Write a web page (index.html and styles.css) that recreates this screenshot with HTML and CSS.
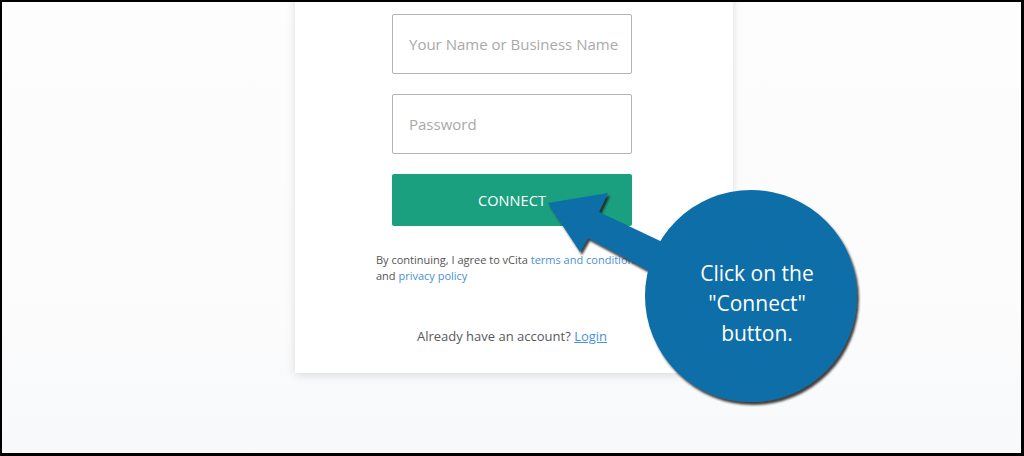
FILE: index.html
```html
<!DOCTYPE html>
<html lang="en">
<head>
<meta charset="utf-8">
<title>vCita Connect</title>
<link rel="stylesheet" href="styles.css">
</head>
<body>
<div class="frame">
  <div class="card">
    <div class="field"><span class="placeholder">Your Name or Business Name</span></div>
    <div class="field"><span class="placeholder">Password</span></div>
    <div class="btn">CONNECT</div>
    <p class="terms">By continuing, I agree to vCita <a href="#">terms and conditions</a> and <a href="#">privacy policy</a></p>
    <p class="login">Already have an account? <a href="#">Login</a></p>
  </div>

  <div class="callout">
    <svg class="callout-art" width="1024" height="456" viewBox="0 0 1024 456" aria-hidden="true">
      <defs>
        <filter id="sh" x="-10%" y="-10%" width="130%" height="130%">
          <feDropShadow dx="2" dy="3" stdDeviation="0.8" flood-color="#1a1a1a" flood-opacity="0.85"/>
        </filter>
      </defs>
      <g filter="url(#sh)" fill="#0a6ea8">
        <polygon points="548,203 608,193 599,212 675,248 655,274 588,238 580,252"/>
        <circle cx="751" cy="296" r="106"/>
      </g>
    </svg>
    <div class="callout-text">Click on the<br>"Connect"<br>button.</div>
  </div>
</div>
</body>
</html>
```

FILE: styles.css
```css
* { box-sizing: border-box; }
html, body { margin: 0; padding: 0; }
body {
  width: 1024px;
  height: 456px;
  overflow: hidden;
  font-family: "Open Sans", "Noto Sans", sans-serif;
}
.frame {
  position: relative;
  width: 1024px;
  height: 456px;
  border-style: solid;
  border-color: #000;
  border-width: 2px 3px 3px 2px;
  background: linear-gradient(180deg, #fdfdfd 0%, #fcfcfc 60%, #f8f9fb 100%);
  overflow: hidden;
}
.card {
  width: 438px;
  margin: -10px 0 0 293px;
  padding: 22px 0 0 0;
  height: 381px;
  background: #fff;
  box-shadow: 0 2px 9px rgba(0, 0, 0, 0.13);
  display: flex;
  flex-direction: column;
  align-items: center;
}
.field {
  width: 240px;
  height: 60px;
  margin-right: 4px;
  border: 1px solid #b3b3b1;
  border-radius: 2px;
  display: flex;
  align-items: center;
  padding-left: 16px;
  margin-bottom: 20px;
}
.placeholder {
  font-size: 15px;
  color: #a9a9a9;
}
.btn {
  width: 240px;
  height: 52px;
  margin-right: 4px;
  background: #1aa07f;
  border-radius: 2px;
  color: #fff;
  font-size: 14.5px;
  display: flex;
  align-items: center;
  justify-content: center;
  letter-spacing: 0.1px;
}
.terms {
  align-self: stretch;
  margin: 26px 0 0;
  padding: 0 83px 0 81px;
  font-size: 11px;
  line-height: 16px;
  color: #555;
}
.terms a { color: #4a8fd6; text-decoration: none; }
.login {
  margin: 43px 4px 0 0;
  font-size: 13px;
  color: #555a60;
}
.login a { color: #4a90e2; text-decoration: underline; }
.callout {
  position: absolute;
  left: -2px;
  top: -2px;
  width: 1024px;
  height: 456px;
  pointer-events: none;
}
.callout-art { position: absolute; left: 0; top: 0; }
.callout-text {
  position: absolute;
  left: 677px;
  top: 258px;
  width: 160px;
  text-align: center;
  color: #fff;
  font-size: 21px;
  line-height: 30px;
}
```
